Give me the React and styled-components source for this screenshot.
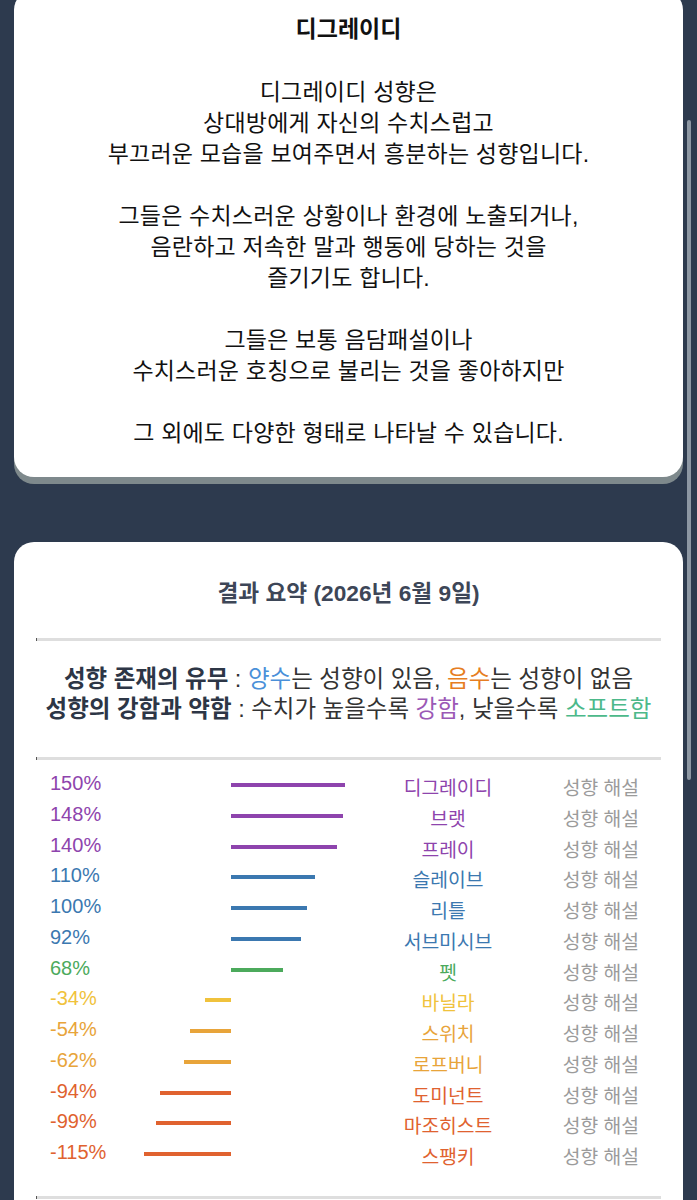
import styled, { createGlobalStyle } from "styled-components"

const GlobalStyle = createGlobalStyle`
  html, body {
    margin: 0;
    padding: 0;
    background: #2d3a4e;
  }
  body {
    font-family: "Liberation Sans", "Noto Sans CJK KR", sans-serif;
    overflow: hidden;
  }
`

const Page = styled.div`
  display: flex;
  flex-direction: column;
  gap: 65px;
  padding: 0 14px 40px;
  margin-top: -10px;
`

const Card = styled.section`
  background: #fff;
  border-radius: 20px;
  box-shadow: 0 7px 0 #7e898c;
  padding: ${(p) => p.$pad};
  text-align: center;
`

const Title = styled.h2`
  margin: 0;
  font-size: ${(p) => p.$size || "23px"};
  line-height: 31px;
  font-weight: 700;
  color: ${(p) => p.$color || "#111"};
`

const Body = styled.div`
  margin-top: 32px;
  font-size: 23px;
  letter-spacing: 0.2px;
  line-height: 31px;
  color: #111;
`

const Para = styled.p`
  margin: 0 0 31px;
  &:last-child {
    margin-bottom: 0;
  }
`

const Rule = styled.hr`
  border: 0;
  border-left: 1px solid #555;
  height: 3px;
  background: #dedede;
  margin: ${(p) => p.$m};
`

const Legend = styled.div`
  font-size: 23.5px;
  line-height: 30px;
  color: #333;
`

const Strong = styled.b`
  color: #2d3646;
`

const Tone = styled.span`
  color: ${(p) => p.$c};
`

const Rows = styled.div`
  display: flex;
  flex-direction: column;
`

const Row = styled.div`
  display: grid;
  grid-template-columns: 90px 220px 176px 1fr;
  align-items: center;
  height: 30.75px;
  padding-left: 14px;
  color: ${(p) => p.$c};
`

const Pct = styled.span`
  font-family: "Liberation Sans", sans-serif;
  font-size: 20px;
  text-align: left;
  margin-top: -3px;
`

const Track = styled.div`
  display: grid;
  grid-template-columns: 91px 1fr;
  align-items: center;
`

const Bar = styled.div`
  height: 4px;
  background: ${(p) => p.$c};
  justify-self: ${(p) => (p.$neg ? "end" : "start")};
  grid-column: ${(p) => (p.$neg ? 1 : 2)};
`

const Name = styled.span`
  font-size: 19.3px;
  text-align: center;
  margin-top: 4px;
`

const Explain = styled.span`
  font-size: 19.3px;
  color: #9b9b9b;
  text-align: right;
  padding-right: 22px;
  margin-top: 4px;
`

const Thumb = styled.div`
  position: fixed;
  right: 6px;
  top: 120px;
  width: 4px;
  height: 660px;
  border-radius: 2px;
  background: #8d97a3;
`

const PURPLE = "#8e44ad"
const BLUE = "#3b78b0"
const GREEN = "#4caa5c"
const YELLOW = "#f0c23c"
const ORANGE = "#e8a43a"
const RED = "#e0622f"

const results = [
  { pct: 150, name: "디그레이디", c: PURPLE },
  { pct: 148, name: "브랫", c: PURPLE },
  { pct: 140, name: "프레이", c: PURPLE },
  { pct: 110, name: "슬레이브", c: BLUE },
  { pct: 100, name: "리틀", c: BLUE },
  { pct: 92, name: "서브미시브", c: BLUE },
  { pct: 68, name: "펫", c: GREEN },
  { pct: -34, name: "바닐라", c: YELLOW },
  { pct: -54, name: "스위치", c: ORANGE },
  { pct: -62, name: "로프버니", c: ORANGE },
  { pct: -94, name: "도미넌트", c: RED },
  { pct: -99, name: "마조히스트", c: RED },
  { pct: -115, name: "스팽키", c: RED },
]

const SCALE = 0.76

export default function App() {
  return (
    <>
      <GlobalStyle />
      <Page>
        <Card $pad="24px 22px 28px">
          <Title>디그레이디</Title>
          <Body>
            <Para>
              디그레이디 성향은
              <br />
              상대방에게 자신의 수치스럽고
              <br />
              부끄러운 모습을 보여주면서 흥분하는 성향입니다.
            </Para>
            <Para>
              그들은 수치스러운 상황이나 환경에 노출되거나,
              <br />
              음란하고 저속한 말과 행동에 당하는 것을
              <br />
              즐기기도 합니다.
            </Para>
            <Para>
              그들은 보통 음담패설이나
              <br />
              수치스러운 호칭으로 불리는 것을 좋아하지만
            </Para>
            <Para>그 외에도 다양한 형태로 나타날 수 있습니다.</Para>
          </Body>
        </Card>

        <Card $pad="36px 22px 40px">
          <Title $size="22.7px" $color="#3d4657">결과 요약 (2026년 6월 9일)</Title>
          <Rule $m="29px 0 23px" />
          <Legend>
            <Strong>성향 존재의 유무</Strong> : <Tone $c="#4a90d9">양수</Tone>는 성향이 있음,{" "}
            <Tone $c="#e67e22">음수</Tone>는 성향이 없음
            <br />
            <Strong>성향의 강함과 약함</Strong> : 수치가 높을수록 <Tone $c="#9b59b6">강함</Tone>,
            낮을수록 <Tone $c="#4cb98a">소프트함</Tone>
          </Legend>
          <Rule $m="33px 0 9px" />
          <Rows>
            {results.map((r) => (
              <Row key={r.name} $c={r.c}>
                <Pct>{r.pct}%</Pct>
                <Track>
                  <Bar
                    $c={r.c}
                    $neg={r.pct < 0}
                    style={{ width: Math.abs(r.pct) * SCALE }}
                  />
                </Track>
                <Name>{r.name}</Name>
                <Explain>성향 해설</Explain>
              </Row>
            ))}
          </Rows>
          <Rule $m="27px 0 0" />
        </Card>
      </Page>
      <Thumb />
    </>
  )
}
